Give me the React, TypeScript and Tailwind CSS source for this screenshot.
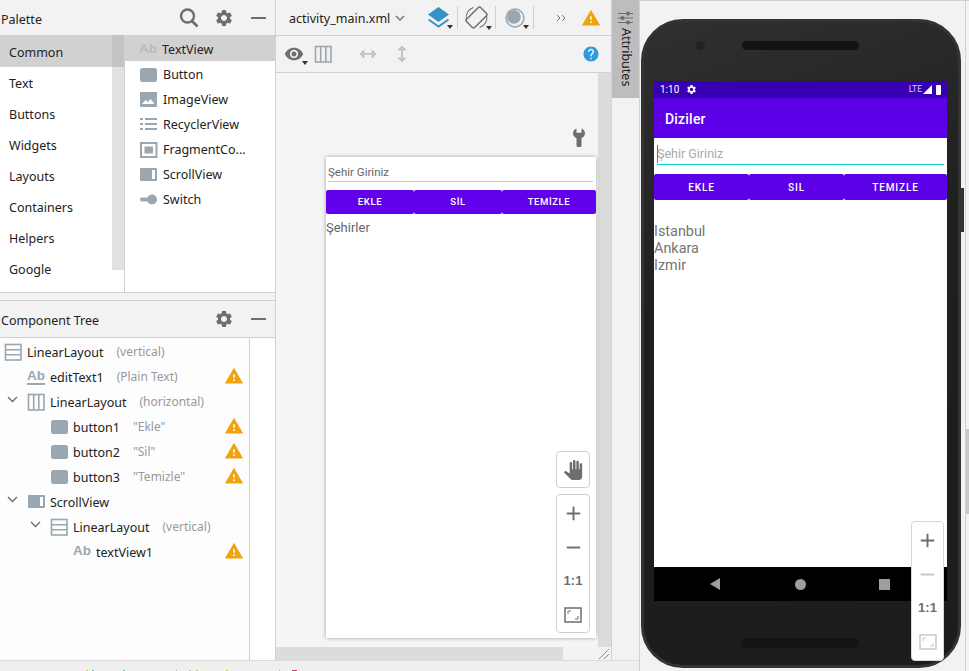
import React from "react";
import { MdSettings, MdWarning, MdPanTool, MdVisibility, MdHelp, MdKeyboardArrowDown, MdAdd, MdRemove } from "react-icons/md";

const Slate = "#9aa7b0";

function Ab({ underline, light }: { underline?: boolean; light?: boolean }) {
  return (
    <span className={`relative flex w-[18px] h-[16px] shrink-0 items-start justify-center font-bold text-[13.5px] leading-[14px] font-['Liberation_Sans',sans-serif] ${light ? "text-[#b4bdc4]" : "text-[#9aa7b0]"}`}>
      Ab
      {underline && <span className="absolute left-0 right-0 bottom-0 h-[2px] bg-[#9aa7b0]" />}
    </span>
  );
}
function Glyph({ kind }: { kind: string }) {
  const c = Slate;
  const d: Record<string, React.ReactNode> = {
    button: <rect x="1" y="2" width="17" height="14" rx="2.5" fill={c} />,
    image: (<g><rect x="1" y="1" width="17" height="15" fill={c} /><path d="M3 13l3.5-4 2.5 2 2.5-3 4 5z" fill="#fff" /></g>),
    list: (<g fill={c}><rect x="1" y="2" width="3" height="2" /><rect x="1" y="7" width="3" height="2" /><rect x="1" y="12" width="3" height="2" /><rect x="6" y="2" width="12" height="2" /><rect x="6" y="7" width="12" height="2" /><rect x="6" y="12" width="12" height="2" /></g>),
    frag: (<g><rect x="2" y="2" width="15.5" height="14" fill="none" stroke={c} strokeWidth="2" /><rect x="5.5" y="5.5" width="8.5" height="7" fill={c} /></g>),
    scroll: (<g><rect x="1" y="2" width="17" height="13" rx="1" fill={c} /><rect x="13" y="4" width="3" height="9" fill="#fff" /></g>),
    sw: (<g fill={c}><rect x="1" y="6.5" width="8" height="4" rx="2" /><circle cx="13" cy="8.5" r="5" /></g>),
    vert: (<g fill="none" stroke={c} strokeWidth="1.6"><rect x="1.5" y="1.5" width="15.5" height="15.5" /><path d="M1.5 6.7h15.5M1.5 11.8h15.5" /></g>),
    horiz: (<g fill="none" stroke={c} strokeWidth="1.6"><rect x="1.5" y="1.5" width="15.5" height="15.5" /><path d="M6.7 1.5v15.5M11.8 1.5v15.5" /></g>),
  };
  return <svg width="19" height="18" viewBox="0 0 19 18" className="shrink-0">{d[kind]}</svg>;
}
function Warn({ size = 20 }: { size?: number }) {
  return <MdWarning size={size} color="#f0a30a" className="shrink-0" />;
}
function Chevron() {
  return <svg width="11" height="7" viewBox="0 0 11 7" className="shrink-0"><path d="M1 1l4.5 4.5L10 1" fill="none" stroke="#6e6e6e" strokeWidth="1.4" /></svg>;
}
function Caret() {
  return <span className="absolute right-[-4px] bottom-[-1px] w-0 h-0 border-l-[3.5px] border-r-[3.5px] border-t-[4px] border-l-transparent border-r-transparent border-t-[#333]" />;
}
function Sep() {
  return <span className="w-px h-[23px] bg-[#cfcfcf] shrink-0" />;
}
function Minus() {
  return <span className="w-[15px] h-[2px] bg-[#6e6e6e]" />;
}

const categories = ["Common", "Text", "Buttons", "Widgets", "Layouts", "Containers", "Helpers", "Google"];
const widgets: [string, string][] = [["ab", "TextView"], ["button", "Button"], ["image", "ImageView"], ["list", "RecyclerView"], ["frag", "FragmentCo..."], ["scroll", "ScrollView"], ["sw", "Switch"]];

function Palette() {
  return (
    <div className="h-[300px] flex flex-col">
      <div className="h-[35px] flex items-center pl-px pr-[9px] text-[#222]">
        <span className="flex-1 text-[12.5px] pt-[6px]">Palette</span>
        <svg width="20" height="20" viewBox="0 0 20 20" className="mr-[15px]">
          <circle cx="8.5" cy="8" r="6.5" fill="none" stroke="#6e6e6e" strokeWidth="2.4" />
          <path d="M13 13l5.5 5.5" stroke="#6e6e6e" strokeWidth="2.8" />
        </svg>
        <MdSettings size={20} color="#6e6e6e" className="mr-[17px]" />
        <Minus />
      </div>
      <div className="h-[257px] flex bg-white">
        <div className="w-[125px] flex border-r border-[#d1d1d1]">
          <div className="w-[112px]">
            {categories.map((c, i) => (
              <div key={c} className={`pl-[9px] flex items-center text-[12.5px] text-[#222] ${i === 0 ? "h-[32px] pt-[4px] bg-[#d1d1d1]" : "h-[31px] pt-[3px]"}`}>{c}</div>
            ))}
          </div>
          <div className="w-[12px] h-[235px] bg-[#e1e1e1]">
            <div className="h-[32px] bg-[#c4c4c4]" />
          </div>
        </div>
        <div className="flex-1">
          {widgets.map(([k, n], i) => (
            <div key={n} className={`pl-[14px] flex items-center gap-[5px] text-[12.5px] text-[#222] ${i === 0 ? "h-[26px] pt-[4px] bg-[#d1d1d1]" : "h-[25px] pt-[3px]"}`}>
              {k === "ab" ? <Ab light /> : <Glyph kind={k} />}
              <span>{n}</span>
            </div>
          ))}
        </div>
      </div>
      <div className="flex-1 border-t border-[#d1d1d1]" />
    </div>
  );
}

const rows: { ind: number; chev?: boolean; icon: string; name: string; hint: string; warn?: boolean }[] = [
  { ind: 4, icon: "vert", name: "LinearLayout", hint: "(vertical)" },
  { ind: 27, icon: "abu", name: "editText1", hint: "(Plain Text)", warn: true },
  { ind: 27, chev: true, icon: "horiz", name: "LinearLayout", hint: "(horizontal)" },
  { ind: 50, icon: "button", name: "button1", hint: '"Ekle"', warn: true },
  { ind: 50, icon: "button", name: "button2", hint: '"Sil"', warn: true },
  { ind: 50, icon: "button", name: "button3", hint: '"Temizle"', warn: true },
  { ind: 27, chev: true, icon: "scroll", name: "ScrollView", hint: "" },
  { ind: 50, chev: true, icon: "vert", name: "LinearLayout", hint: "(vertical)" },
  { ind: 73, icon: "ab", name: "textView1", hint: "", warn: true },
];

function Tree() {
  return (
    <div className="flex-1 flex flex-col border-t border-[#d1d1d1] min-h-0">
      <div className="h-[37px] shrink-0 flex items-center pl-px pr-[9px] border-b border-[#d1d1d1]">
        <span className="flex-1 text-[12.5px] text-[#222] pt-[5px]">Component Tree</span>
        <MdSettings size={20} color="#6e6e6e" className="mr-[17px]" />
        <Minus />
      </div>
      <div className="flex-1 flex bg-[#fdfdfd] min-h-0">
        <div className="w-[250px] border-r border-[#d1d1d1] pt-[1px]">
          {rows.map((r) => (
            <div key={r.name + r.ind + r.hint} style={{ paddingLeft: r.ind }} className="relative h-[25px] flex items-center text-[12.5px] text-[#222]">
              {r.chev && <span className="absolute top-[7px]" style={{ left: r.ind - 20 }}><Chevron /></span>}
              {r.icon === "ab" ? <Ab /> : r.icon === "abu" ? <Ab underline /> : <Glyph kind={r.icon} />}
              <span className={`pt-[3px] ${r.icon === "abu" || r.icon === "ab" ? "ml-[5px]" : "ml-[4px]"}`}>{r.name}</span>
              {r.hint && <span className="ml-[13px] pt-[1px] text-[12px] text-[#999]">{r.hint}</span>}
              {r.warn && <span className="absolute left-[224px] top-[2px]"><Warn /></span>}
            </div>
          ))}
        </div>
        <div className="flex-1 bg-white" />
      </div>
    </div>
  );
}

function ZoomTools({ dim }: { dim?: boolean }) {
  const s = dim ? "#c8c8c8" : "#6e6e6e";
  return (
    <>
      <span className="h-[34px] flex items-center"><MdAdd size={23} color="#6e6e6e" /></span>
      <span className="h-[34px] flex items-center"><MdRemove size={23} color={dim ? "#c4c4c4" : "#6e6e6e"} /></span>
      <span className="h-[34px] flex items-center text-[13px] font-bold text-[#6e6e6e] font-['Liberation_Sans',sans-serif]">1:1</span>
      <span className="h-[34px] flex items-center">
        <svg width="18" height="16" viewBox="0 0 18 16">
          <rect x="1" y="1" width="16" height="14" fill="none" stroke={s} strokeWidth="1.5" />
          <path d="M4 7V4h3M14 9v3h-3" fill="none" stroke={s} strokeWidth="1" />
        </svg>
      </span>
    </>
  );
}

function BlueprintButton({ w, children }: { w: string; children: React.ReactNode }) {
  return <div className={`${w} flex items-center justify-center rounded-[2px] bg-[#6200ee]`}>{children}</div>;
}

function Blueprint() {
  return (
    <div className="absolute left-[50px] top-[84px] w-[270px] h-[481px] bg-white shadow-[0_0_4px_rgba(0,0,0,0.35)] font-['Roboto',sans-serif]">
      <div className="h-[25px] ml-[2px] mr-[3px] pt-[8px] text-[11.5px] leading-[14px] text-[#666] border-b border-[#bfc9c7]">Şehir Giriniz</div>
      <div className="mt-[8px] h-[24px] flex text-white text-[9.5px] font-medium tracking-[0.6px]">
        <BlueprintButton w="w-[88px]">EKLE</BlueprintButton>
        <BlueprintButton w="w-[88px]">SİL</BlueprintButton>
        <BlueprintButton w="flex-1">TEMİZLE</BlueprintButton>
      </div>
      <div className="mt-[5px] text-[13px] text-[#666] leading-[18px]">Şehirler</div>
      <div className="absolute left-[230px] top-[294px] w-[34px] h-[37px] rounded-[4px] border border-[#cfcfcf] bg-white flex items-center justify-center">
        <MdPanTool size={20} color="#6e6e6e" />
      </div>
      <div className="absolute left-[230px] top-[337px] w-[34px] h-[139px] rounded-[4px] border border-[#cfcfcf] bg-white flex flex-col items-center pt-[1px]">
        <ZoomTools />
      </div>
    </div>
  );
}

function IconSlot({ children }: { children: React.ReactNode }) {
  return <span className="w-[37px] flex justify-center">{children}</span>;
}

function Center() {
  return (
    <div className="w-[336px] flex flex-col bg-[#f2f2f2] border-l border-[#d1d1d1]">
      <div className="h-[36px] flex items-center pl-[13px] border-b border-[#d1d1d1] shrink-0">
        <span className="text-[12.5px] text-[#222] pt-[4px]">activity_main.xml</span>
        <span className="ml-[1px]"><MdKeyboardArrowDown size={18} color="#777" /></span>
        <span className="ml-[11px]"><Sep /></span>
        <IconSlot>
          <span className="relative">
            <svg width="21" height="21" viewBox="0 0 21 21" className="block">
              <path d="M10.5 0L21 7.5 10.5 15 0 7.5z" fill="#3592c4" />
              <path d="M0.5 12.5l10 7 10-7" fill="none" stroke="#3592c4" strokeWidth="2" />
            </svg>
            <Caret />
          </span>
        </IconSlot>
        <Sep />
        <IconSlot>
          <span className="relative">
            <svg width="23" height="23" viewBox="0 0 22 22" className="block">
              <rect x="5.5" y="1.5" width="11" height="19" rx="1.5" transform="rotate(45 11 11)" fill="none" stroke="#6e6e6e" strokeWidth="1.4" />
              <path d="M1.2 12.5A10 10 0 0 1 8 1.4M20.8 9.5A10 10 0 0 1 14 20.6" fill="none" stroke="#6e6e6e" strokeWidth="1" />
            </svg>
            <Caret />
          </span>
        </IconSlot>
        <Sep />
        <IconSlot>
          <span className="relative">
            <svg width="20" height="20" viewBox="0 0 19 19" className="block">
              <circle cx="9.5" cy="9.5" r="8.5" fill="#eef1f2" stroke="#9aa7b0" strokeWidth="1.4" />
              <circle cx="8.5" cy="8.5" r="6.5" fill="#9aa7b0" />
            </svg>
            <Caret />
          </span>
        </IconSlot>
        <Sep />
        <svg width="10" height="8" viewBox="0 0 10 8" className="ml-[22px]"><path d="M1 1l3 3-3 3M6 1l3 3-3 3" fill="none" stroke="#777" strokeWidth="1" /></svg>
        <span className="ml-[15px]"><Warn size={20} /></span>
      </div>
      <div className="h-[37px] flex items-center pl-[8px] border-b border-[#d1d1d1] shrink-0">
        <span className="relative mr-[10px]"><MdVisibility size={20} color="#6e6e6e" className="block" /><Caret /></span>
        <Glyph kind="horiz" />
        <span className="ml-[12px] mr-[14px]"><Sep /></span>
        <svg width="18" height="10" viewBox="0 0 18 10" className="mr-[20px]"><path d="M1 5h16" stroke="#c4c4c4" strokeWidth="2" /><path d="M5 1v8L1 5zM13 1v8l4-4z" fill="#c4c4c4" stroke="#c4c4c4" /></svg>
        <svg width="10" height="18" viewBox="0 0 10 18"><path d="M5 1v16" stroke="#c4c4c4" strokeWidth="2" /><path d="M1 5h8L5 1zM1 13h8l-4 4z" fill="#c4c4c4" stroke="#c4c4c4" /></svg>
        <span className="flex-1" />
        <span className="mr-[11px]"><MdHelp size={18} color="#2f9bdc" className="block" /></span>
      </div>
      <div className="flex-1 flex flex-col min-h-0">
        <div className="flex-1 flex min-h-0">
          <div className="flex-1 relative bg-[#f5f5f5]">
            <svg width="12" height="19" viewBox="0 0 12 19" className="absolute left-[297px] top-[55px]">
              <path d="M3.5 0.5v4.2h5V0.5C10.6 1.3 12 3.2 12 5.3c0 2.2-1.3 4-3.5 4.8V17.5a1.5 1.5 0 0 1-1.5 1.5H5a1.5 1.5 0 0 1-1.5-1.5V10.1C1.3 9.3 0 7.5 0 5.3 0 3.2 1.4 1.3 3.5 0.5z" fill="#6e6e6e" />
            </svg>
            <Blueprint />
          </div>
          <div className="w-[13px] bg-[#dcdcdc]" />
        </div>
        <div className="h-[13px] flex bg-[#f2f2f2] shrink-0">
          <div className="w-[287px] bg-[#dcdcdc]" />
          <div className="flex-1" />
          <svg width="12" height="13" viewBox="0 0 12 13" className="mr-px"><path d="M1 12L11 2M6 12l5-5" stroke="#777" strokeWidth="0.8" /></svg>
        </div>
      </div>
    </div>
  );
}

function AttributesStrip() {
  return (
    <div className="w-[28px] bg-[#f2f2f2] border-l border-[#d1d1d1]">
      <div className="h-[98px] bg-[#bdbdbd] flex flex-col items-center pt-[11px] gap-[3px]">
        <svg width="15" height="14" viewBox="0 0 15 14">
          <g stroke="#6e6e6e" fill="#6e6e6e">
            <path d="M0 2.5h15M0 7h15M0 11.5h15" strokeWidth="1.2" />
            <circle cx="10" cy="2.5" r="1.6" />
            <circle cx="4.5" cy="7" r="1.6" />
            <circle cx="10" cy="11.5" r="1.6" />
          </g>
        </svg>
        <span className="[writing-mode:vertical-rl] text-[12.5px] text-[#222] leading-none">Attributes</span>
      </div>
    </div>
  );
}

function PhoneButton({ w, children }: { w: string; children: React.ReactNode }) {
  return <div className={`${w} flex items-center justify-center rounded-[2px] bg-[#5c00e8]`}>{children}</div>;
}

function Phone() {
  return (
    <div className="flex-1 relative bg-[#f2f2f2] border-l border-t border-[#d1d1d1] overflow-hidden pl-px pt-[18px]">
      <span className="absolute top-0 bottom-0 right-[3px] w-px bg-[#d1d1d1]" />
      <span className="absolute top-[428px] h-[85px] right-0 w-[3px] bg-[#c8c8c8]" />
      <div className="w-[320px] h-[649px] rounded-[42px] bg-[linear-gradient(160deg,#303030,#1f1f1f_40%,#1c1c1c)] border-[3px] border-[#333] pt-[59px] px-[10px] relative">
        <span className="absolute left-[52px] top-[19px] w-[9px] h-[9px] rounded-full bg-[#232326]" />
        <span className="absolute left-[98px] top-[19px] w-[117px] h-[9px] rounded-full bg-[#131313]" />
        <span className="absolute left-[98px] bottom-[17px] w-[117px] h-[10px] rounded-full bg-[#131313]" />
        <div className="w-[293px] h-[520px] bg-white flex flex-col font-['Roboto',sans-serif]">
          <div className="h-[17px] bg-[#3700b3] flex items-center px-[6px] text-white">
            <span className="text-[10px] mr-[7px]">1:10</span>
            <MdSettings size={11} />
            <span className="flex-1" />
            <span className="text-[8.5px] mr-[1px] text-[#d8d0f0]">LTE</span>
            <svg width="10" height="9" viewBox="0 0 10 9"><path d="M0 9L9 0v9z" fill="#fff" /></svg>
            <span className="ml-[3px] w-[5px] h-[10px] bg-white rounded-[1px]" />
          </div>
          <div className="h-[40px] bg-[#5c00e8] flex items-center pl-[11px] pt-[3px] text-white text-[14px] font-medium tracking-[0.2px]">Diziler</div>
          <div className="h-[27px] mx-[3px] relative flex flex-col justify-end">
            <span className="absolute left-0 top-[7px] w-px h-[18px] bg-[#03a99a]" />
            <span className="text-[12.5px] text-[#a8a8a8] leading-[18px] pb-[1px]">Şehir Giriniz</span>
            <span className="h-[1px] bg-[#00d8c4]" />
          </div>
          <div className="mt-[9px] h-[26px] flex text-white text-[10px] font-medium tracking-[0.9px]">
            <PhoneButton w="w-[95px]">EKLE</PhoneButton>
            <PhoneButton w="w-[95px]">SIL</PhoneButton>
            <PhoneButton w="flex-1">TEMIZLE</PhoneButton>
          </div>
          <div className="mt-[23px] text-[14.4px] leading-[17px] text-[#757575]">
            <div>Istanbul</div>
            <div>Ankara</div>
            <div>Izmir</div>
          </div>
          <div className="flex-1" />
          <div className="h-[34px] bg-black flex items-center pl-[56px] shrink-0">
            <span className="w-0 h-0 border-y-[6px] border-y-transparent border-r-[10px] border-r-[#9e9e9e]" />
            <span className="ml-[75px] w-[11px] h-[11px] rounded-full bg-[#9e9e9e]" />
            <span className="ml-[73px] w-[11px] h-[11px] bg-[#9e9e9e]" />
          </div>
        </div>
      </div>
      <span className="absolute left-[321px] top-[187px] w-[3px] h-[44px] bg-[#333]" />
      <div className="absolute left-[271px] top-[520px] w-[33px] h-[140px] rounded-[4px] border border-[#d8d8d8] bg-white flex flex-col items-center pt-[1px]">
        <ZoomTools dim />
      </div>
    </div>
  );
}

const specks: [number, number, string][] = [
  [86, 2, "#d8c83a"], [92, 2, "#48c8b8"], [123, 2, "#48c8b8"], [176, 1, "#bbbbbb"], [189, 2, "#c8c0a0"],
  [196, 2, "#d8c83a"], [226, 2, "#d8c83a"], [279, 1, "#bbbbbb"], [292, 5, "#c84060"],
];

function BottomStrip() {
  return (
    <div className="h-[11px] flex-1 bg-[#efefef] border-t border-[#dcdcdc] relative">
      {specks.map(([x, w, c]) => (
        <span key={x} className="absolute bottom-0 h-px" style={{ left: x, width: w, backgroundColor: c }} />
      ))}
    </div>
  );
}

export default function App() {
  return (
    <div className="w-[969px] h-[671px] overflow-hidden flex bg-[#f2f2f2] font-['Noto_Sans',sans-serif]">
      <div className="w-[639px] flex flex-col shrink-0">
        <div className="h-[660px] flex shrink-0">
          <div className="w-[275px] flex flex-col shrink-0">
            <Palette />
            <Tree />
          </div>
          <Center />
          <AttributesStrip />
        </div>
        <BottomStrip />
      </div>
      <Phone />
    </div>
  );
}
